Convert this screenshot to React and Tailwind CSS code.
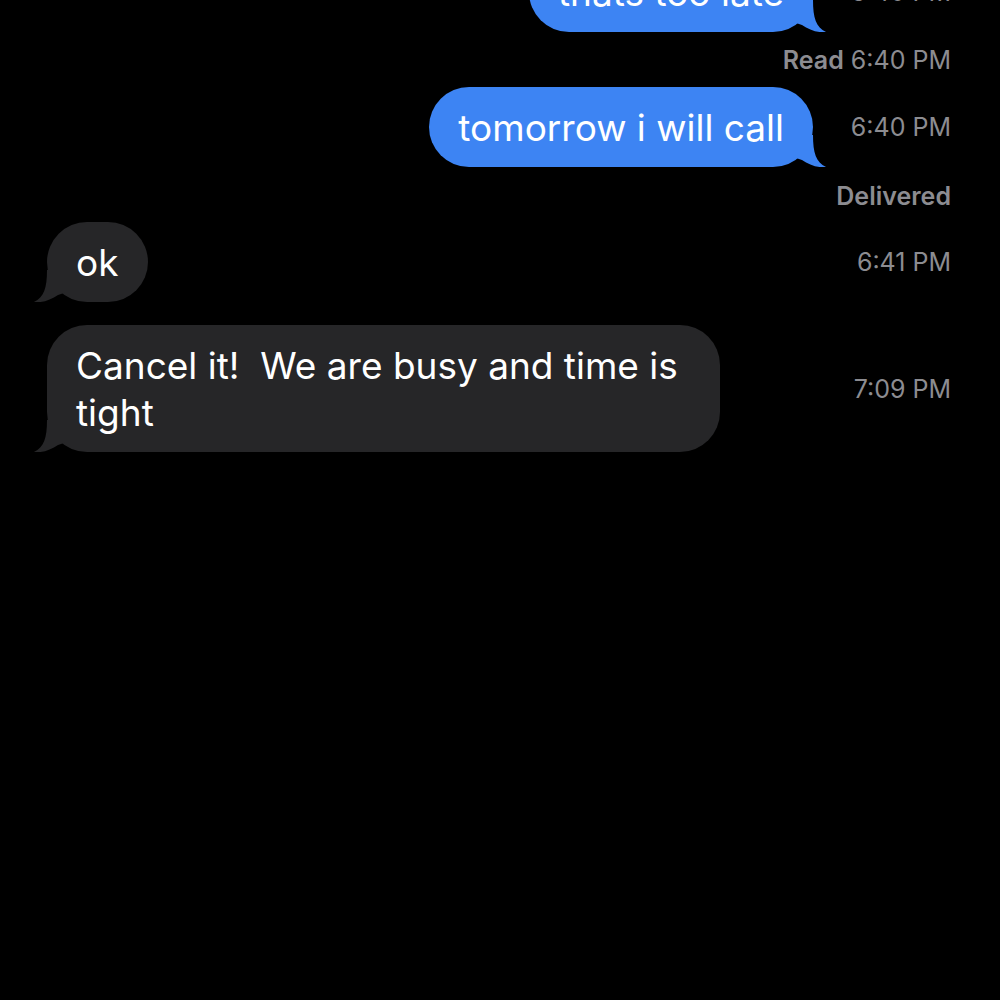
import React from "react";

const FONT = { fontFamily: "Inter, 'Noto Sans', sans-serif" };

function Tail({ side, color }) {
  const pos = side === "right" ? "right-[-14px]" : "left-[-14px] -scale-x-100";
  return (
    <svg
      className={`absolute bottom-0 ${pos}`}
      width="34"
      height="32"
      viewBox="0 0 34 32"
    >
      <path
        d="M20 0 C20 18 23 27 33 32 C25 33 16 30 9 25 L0 22 L0 0 Z"
        fill={color}
      />
    </svg>
  );
}

function Sent({ children }) {
  return (
    <div className="relative rounded-[40px] bg-[#3d84f3] px-[29px] py-[16.5px] text-[37px] leading-[47px] text-white whitespace-pre-wrap">
      {children}
      <Tail side="right" color="#3d84f3" />
    </div>
  );
}

function Received({ children, className = "" }) {
  return (
    <div
      className={`relative rounded-[40px] bg-[#262628] px-[29px] py-[16.5px] text-[37px] leading-[47px] text-white whitespace-pre-wrap ${className}`}
    >
      {children}
      <Tail side="left" color="#262628" />
    </div>
  );
}

function Row({ sent, time, children, className = "" }) {
  return (
    <div className={`flex items-center ${className}`}>
      <div className={`flex flex-1 ${sent ? "justify-end" : "justify-start"}`}>
        {children}
      </div>
      <div className="w-[138px] shrink-0 text-right text-[25px] leading-[30px] text-[#8c8c91]">
        {time}
      </div>
    </div>
  );
}

function Status({ children, className = "" }) {
  return (
    <div
      className={`text-right text-[25px] leading-[30px] text-[#8c8c91] ${className}`}
    >
      {children}
    </div>
  );
}

export default function App() {
  return (
    <div className="h-[1000px] w-full overflow-hidden bg-black" style={FONT}>
      <div className="mt-[-48px] flex flex-col pl-[47px] pr-[49px]">
        <Row sent time="6:40 PM">
          <Sent>thats too late</Sent>
        </Row>
        <Status className="mt-[13px]">
          <span className="font-semibold">Read</span> 6:40 PM
        </Status>
        <Row sent time="6:40 PM" className="mt-[12px]">
          <Sent>tomorrow i will call</Sent>
        </Row>
        <Status className="mt-[14px] font-semibold">Delivered</Status>
        <Row time="6:41 PM" className="mt-[11px]">
          <Received>ok</Received>
        </Row>
        <Row time="7:09 PM" className="mt-[23px]">
          <Received className="w-[673px]">
            {"Cancel it!  We are busy and time is"}
            <br />
            {"tight"}
          </Received>
        </Row>
      </div>
    </div>
  );
}
